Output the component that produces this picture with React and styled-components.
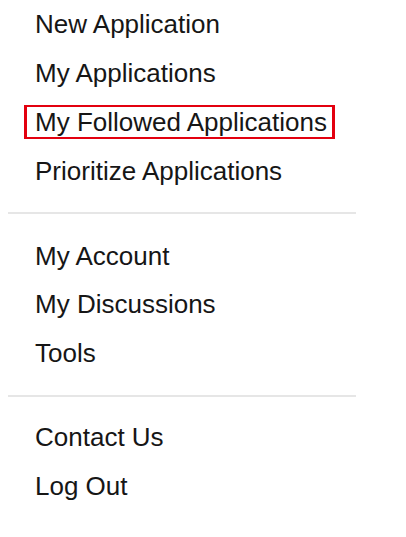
import React from "react"
import styled, { createGlobalStyle } from "styled-components"

const GlobalStyle = createGlobalStyle`
  body {
    margin: 0;
    background: #fff;
    font-family: "Liberation Sans", Arial, sans-serif;
  }
`

const Nav = styled.nav`
  width: 348px;
  padding-left: 8px;
`

const Group = styled.ul`
  list-style: none;
  margin: 0;
  padding: 0;
`

const Item = styled.li`
  display: flex;
  align-items: center;
  height: 48.8px;
  padding-left: 16px;
`

const Link = styled.a`
  display: inline-block;
  line-height: 30px;
  padding: 0 5px 0 8px;
  font-size: 26px;
  color: #161616;
  text-decoration: none;
  border-style: solid;
  border-width: 2px 3px;
  border-color: ${({ $focused }) => ($focused ? "#e3000f" : "transparent")};
`

const Divider = styled.hr`
  margin: 17px 0 ${({ $last }) => ($last ? "16px" : "17px")};
  border: 0;
  height: 2px;
  background: #e6e6e6;
`

const groups = [
  ["New Application", "My Applications", "My Followed Applications", "Prioritize Applications"],
  ["My Account", "My Discussions", "Tools"],
  ["Contact Us", "Log Out"],
]

const App = () => {
  return (
    <>
      <GlobalStyle />
      <Nav>
        {groups.map((items, i) => (
          <React.Fragment key={i}>
            {i > 0 && <Divider $last={i === groups.length - 1} />}
            <Group>
              {items.map((label) => (
                <Item key={label}>
                  <Link href="#" $focused={label === "My Followed Applications"}>
                    {label}
                  </Link>
                </Item>
              ))}
            </Group>
          </React.Fragment>
        ))}
      </Nav>
    </>
  )
}

export default App
